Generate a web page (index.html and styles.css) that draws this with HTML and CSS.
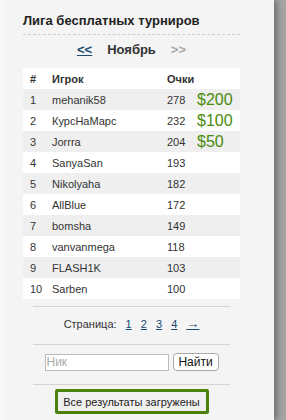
FILE: index.html
```html
<!DOCTYPE html>
<html lang="ru">

<head>
    <meta charset="UTF-8">
    <meta name="viewport" content="width=device-width, initial-scale=1.0">
    <title>Лига бесплатных турниров</title>
    <link rel="stylesheet" href="styles.css">
</head>

<body>
    <div class="panel">
        <h2 class="title">Лига бесплатных турниров</h2>

        <div class="month-nav">
            <a class="nav-link" href="#">&lt;&lt;</a>
            <span class="month">Ноябрь</span>
            <span class="nav-off">&gt;&gt;</span>
        </div>

        <table class="rating">
            <tr class="head">
                <th class="c-num">#</th>
                <th class="c-name">Игрок</th>
                <th class="c-pts">Очки</th>
                <th class="c-prize"></th>
            </tr>
            <tr><td>1</td><td>mehanik58</td><td>278</td><td class="prize">$200</td></tr>
            <tr><td>2</td><td>КурсНаМарс</td><td>232</td><td class="prize">$100</td></tr>
            <tr><td>3</td><td>Jorrra</td><td>204</td><td class="prize">$50</td></tr>
            <tr><td>4</td><td>SanyaSan</td><td>193</td><td></td></tr>
            <tr><td>5</td><td>Nikolyaha</td><td>182</td><td></td></tr>
            <tr><td>6</td><td>AllBlue</td><td>172</td><td></td></tr>
            <tr><td>7</td><td>bomsha</td><td>149</td><td></td></tr>
            <tr><td>8</td><td>vanvanmega</td><td>118</td><td></td></tr>
            <tr><td>9</td><td>FLASH1K</td><td>103</td><td></td></tr>
            <tr><td>10</td><td>Sarben</td><td>100</td><td></td></tr>
        </table>

        <div class="block pages">
            Страница:
            <a href="#">1</a>
            <a href="#">2</a>
            <a href="#">3</a>
            <a href="#">4</a>
            <a class="next" href="#">&rarr;</a>
        </div>

        <form class="block search">
            <input class="nick" type="text" placeholder="Ник">
            <button class="find" type="button">Найти</button>
        </form>

        <div class="block done">
            <span class="done-box">Все результаты загружены</span>
        </div>
    </div>
</body>

</html>
```

FILE: styles.css
```css
* {
    margin: 0;
    padding: 0;
    box-sizing: border-box;
}

body {
    background: #a4a4a4;
    font-family: "Liberation Sans", Arial, sans-serif;
    font-size: 11px;
    color: #333;
}

.panel {
    width: 274px;
    height: 420px;
    padding: 13px 34px 0 23px;
    background: linear-gradient(to right, #f9f9f9, #f4f4f4 8px);
    box-shadow: 3px 0 6px #6f6f6f;
}

.title {
    font-size: 13px;
    line-height: 16px;
    color: #222;
    padding-bottom: 5px;
    border-bottom: 1px dashed #cfcfcf;
}

.month-nav {
    display: flex;
    justify-content: center;
    gap: 15px;
    padding: 7px 0 10px;
    font-size: 13px;
    font-weight: bold;
    line-height: 16px;
}

.nav-link {
    color: #1a4a72;
}

.month {
    color: #333;
}

.nav-off {
    color: #aaa;
}

.rating {
    width: 217px;
    border-collapse: collapse;
    background: #fff;
}

.rating th,
.rating td {
    height: 21px;
    padding: 0;
    text-align: left;
    vertical-align: middle;
}

.rating th {
    font-weight: bold;
    color: #333;
}

.rating tr:nth-child(even) {
    background: #efefef;
}

.c-num {
    width: 29px;
    padding-left: 7px !important;
}

.rating td:first-child {
    padding-left: 7px;
}

.c-name {
    width: 115px;
}

.c-pts {
    width: 30px;
}

.prize {
    font-size: 16px;
    color: #4a8a0c;
}

.block {
    margin: 0 10px;
    border-top: 1px solid #d4d4d4;
    text-align: center;
}

.pages {
    margin-top: 7px;
    padding: 10px 0 13px;
    line-height: 14px;
}

.pages a {
    color: #1a4a72;
    margin-left: 6px;
}

.pages .next {
    font-size: 13px;
}

.search {
    padding: 8px 0 13px;
    display: flex;
    justify-content: center;
    align-items: center;
    gap: 4px;
}

.nick {
    width: 124px;
    height: 17px;
    border: 1px solid #bbb;
    background: #fff;
    font: 12px "Liberation Sans", Arial, sans-serif;
    padding-left: 1px;
}

.nick::placeholder {
    color: #aaa;
}

.find {
    width: 46px;
    height: 18px;
    border: 1px solid #aaa;
    border-radius: 4px;
    background: #fff;
    font: 12px "Liberation Sans", Arial, sans-serif;
    color: #111;
}

.done {
    padding-top: 4px;
}

.done-box {
    display: inline-block;
    width: 154px;
    padding: 3px 0 2px;
    border: 3px solid #4a820a;
    border-radius: 2px;
    background: #f0f0f0;
    color: #222;
    line-height: 14px;
}
```
